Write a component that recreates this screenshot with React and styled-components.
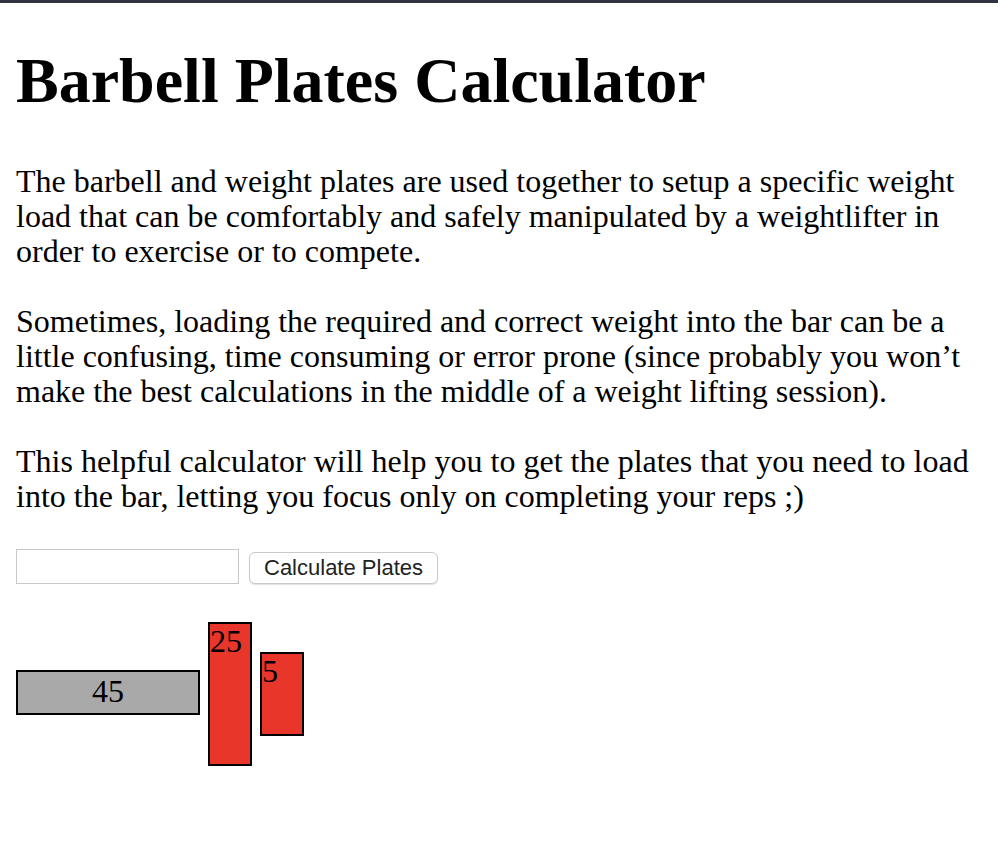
import React, { useState } from "react";
import styled, { createGlobalStyle } from "styled-components";

const GlobalStyle = createGlobalStyle`
  html, body {
    margin: 0;
    padding: 0;
    background: #ffffff;
  }
  body {
    font-family: "Liberation Serif", "Times New Roman", serif;
    color: #000000;
  }
`;

const TopEdge = styled.div`
  height: 3px;
  background-color: #2f3540;
`;

const Page = styled.main`
  padding: 0 16px 16px 16px;
`;

const Title = styled.h1`
  font-size: 64px;
  font-weight: bold;
  line-height: 70px;
  margin: 43px 0 48px 0;
`;

const Paragraph = styled.p`
  font-size: 32px;
  line-height: 35px;
  margin: 0 0 35px 0;
`;

const Form = styled.form`
  display: flex;
  align-items: center;
  gap: 10px;
`;

const WeightInput = styled.input`
  width: 223px;
  height: 35px;
  box-sizing: border-box;
  border: 1.5px solid #c8c8c8;
  border-radius: 0;
  padding: 0 6px;
  font-size: 20px;
  font-family: "Liberation Sans", Arial, sans-serif;
`;

const CalcButton = styled.button`
  height: 32px;
  box-sizing: border-box;
  padding: 0 14px;
  border: 1px solid #c9c9c9;
  border-radius: 6px;
  background: #ffffff;
  box-shadow: 0 1px 1px rgba(0, 0, 0, 0.12);
  font-family: "Liberation Sans", Arial, sans-serif;
  font-size: 22px;
  color: #222222;
  margin-top: 3px;
`;

const Rack = styled.div`
  display: flex;
  align-items: center;
  gap: 8px;
  margin-top: 34px;
`;

const Bar = styled.div`
  width: 184px;
  height: 45px;
  box-sizing: border-box;
  border: 2px solid #000000;
  background-color: #a9a9a9;
  font-size: 32px;
  line-height: 39px;
  text-align: center;
`;

const Plate = styled.div`
  width: 44px;
  height: ${(p) => p.$height}px;
  box-sizing: border-box;
  border: 2px solid #000000;
  background-color: #e8362a;
  font-size: 32px;
  line-height: 35px;
  text-align: left;
  margin-top: 4px;
`;

const plateHeights = { 45: 164, 35: 154, 25: 144, 10: 104, 5: 84, 2.5: 64 };

export default function App() {
  const [weight, setWeight] = useState("");
  const plates = [25, 5];

  return (
    <>
      <GlobalStyle />
      <TopEdge />
      <Page>
        <Title>Barbell Plates Calculator</Title>
        <Paragraph>
          The barbell and weight plates are used together to setup a specific weight
          load that can be comfortably and safely manipulated by a weightlifter in
          order to exercise or to compete.
        </Paragraph>
        <Paragraph>
          Sometimes, loading the required and correct weight into the bar can be a
          little confusing, time consuming or error prone (since probably you won’t
          make the best calculations in the middle of a weight lifting session).
        </Paragraph>
        <Paragraph>
          This helpful calculator will help you to get the plates that you need to load
          into the bar, letting you focus only on completing your reps ;)
        </Paragraph>
        <Form onSubmit={(e) => e.preventDefault()}>
          <WeightInput value={weight} onChange={(e) => setWeight(e.target.value)} />
          <CalcButton type="submit">Calculate Plates</CalcButton>
        </Form>
        <Rack>
          <Bar>45</Bar>
          {plates.map((p, i) => (
            <Plate key={i} $height={plateHeights[p]}>
              {p}
            </Plate>
          ))}
        </Rack>
      </Page>
    </>
  );
}
